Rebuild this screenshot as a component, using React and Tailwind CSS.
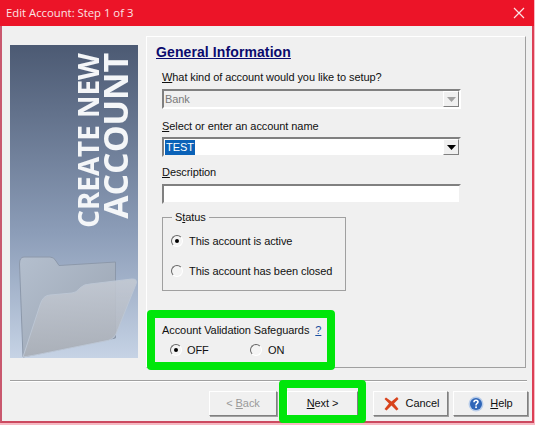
import React from "react";

const font = "font-['Liberation_Sans',Arial,sans-serif]";

const Radio = ({ checked }) => (
  <span className="flex h-[12px] w-[12px] shrink-0 items-center justify-center rounded-full border border-t-[#666] border-l-[#666] border-r-white border-b-white bg-[#f4f4f4]">
    {checked && <span className="h-[4px] w-[4px] rounded-full bg-black"></span>}
  </span>
);

const Combo = ({ disabled, children }) => (
  <div
    className={
      disabled
        ? "flex h-[20px] w-[299px] items-center justify-between border-2 border-t-[#808080] border-l-[#808080] border-r-white border-b-white bg-[#f0f0f0]"
        : "flex h-[20px] w-[299px] items-center justify-between border-2 border-t-[#808080] border-l-[#808080] border-r-[#f0f0f0] border-b-[#f0f0f0] bg-white"
    }
  >
    <div className="flex-1">{children}</div>
    <div className="flex h-[16px] w-[16px] items-center justify-center border border-t-white border-l-white border-r-[#808080] border-b-[#808080] bg-[#f0f0f0]">
      <svg width="9" height="5" viewBox="0 0 9 5">
        <path d="M0 0H9L4.5 5Z" fill={disabled ? "#a0a0a0" : "#000"} />
      </svg>
    </div>
  </div>
);

const Btn = ({ className, children }) => (
  <button
    className={
      "flex h-[25px] items-center justify-center border border-t-white border-l-white border-r-[#808080] border-b-[#808080] bg-[#f0f0f0] shadow-[1px_1px_0_#a0a0a0] " +
      className
    }
  >
    {children}
  </button>
);

const Folder = () => (
  <svg width="128" height="108" viewBox="0 0 128 108" className="mt-auto shrink-0">
    <defs>
      <linearGradient id="back" x1="0" y1="0" x2="1" y2="1">
        <stop offset="0" stopColor="#b4bfce" />
        <stop offset="1" stopColor="#98a2b0" />
      </linearGradient>
      <linearGradient id="front" x1="0" y1="0" x2="0" y2="1">
        <stop offset="0" stopColor="#c4cad4" />
        <stop offset="1" stopColor="#abb0b8" />
      </linearGradient>
      <filter id="soft">
        <feGaussianBlur stdDeviation="0.4" />
      </filter>
    </defs>
    <g filter="url(#soft)">
      <path
        d="M13 107L9.5 14Q9.5 7 14 7L40 7Q44 7 46 11L49 15.5L105.5 12L105.5 88Z"
        fill="url(#back)"
        stroke="#8c98aa"
      />
      <path
        d="M13 107L30 55Q33 45 40 45L62 43Q66 43 70 38Q74 34 80 34L122 29Q128 29 126 34L106 84Q103 90 95 91L25 105Z"
        fill="url(#front)"
        fillOpacity="0.88"
        stroke="#bcc6d4"
      />
    </g>
  </svg>
);

export default function App() {
  return (
    <div className={"relative h-[425px] w-[535px] overflow-hidden bg-[#f7b9c3] text-[11px] leading-none tracking-[-0.08px] text-[#111] " + font}>
      <div className="flex h-[423px] w-[534px] flex-col border-x-2 border-b-2 border-l-[#c9586e] border-r-[#dc3f55] border-b-[#cc4a60] bg-[#f0f0f0]">
        {/* Title bar */}
        <div className="-mx-[2px] flex h-[26px] shrink-0 items-center justify-between bg-[#ec1428] pl-[6px] pr-[9px]">
          <span className="font-['Open_Sans',sans-serif] text-[11.3px] tracking-normal text-[#fbe3e5]">Edit Account: Step 1 of 3</span>
          <svg width="12" height="12" viewBox="0 0 12 12">
            <path d="M1 1L11 11M11 1L1 11" stroke="#fbe3e5" strokeWidth="1.2" />
          </svg>
        </div>

        <div className="flex gap-[8px] pl-[8px] pt-[10px]">
          {/* Side picture */}
          <div className="mt-[9px] flex h-[313px] w-[128px] shrink-0 flex-col overflow-hidden bg-gradient-to-b from-[#4c5a73] via-[#8c9db8] via-60% to-[#c6d3e5]">
            <div className="flex justify-end pr-[9px] pt-[8px]">
              <div className="rotate-180 text-end font-['Open_Sans',sans-serif] font-bold tracking-normal text-[#f4f6f8] [writing-mode:vertical-rl]">
                <div className="text-[27.8px] leading-[25px]">CREATE NEW</div>
                <div className="text-[33.8px] leading-[28px]">ACCOUNT</div>
              </div>
            </div>
            <Folder />
          </div>

          {/* Main panel */}
          <div className="flex h-[332px] w-[380px] flex-col border border-t-white border-l-white border-r-[#a0a0a0] border-b-[#a0a0a0] pl-[15px] pt-[7px]">
            <h1 className="-ml-[6px] h-[16px] text-[14px] font-bold leading-[16px] tracking-[0.1px] text-[#0a0a6e] underline">General Information</h1>

            <label className="mt-[9px] h-[16px] leading-[16px]"><u>W</u>hat kind of account would you like to setup?</label>
            <div className="mt-[4px]">
              <Combo disabled>
                <span className="block pl-[1px] pt-[1px] text-[#7a7a7a]">Bank</span>
              </Combo>
            </div>

            <label className="mt-[9px] h-[16px] leading-[16px]"><u>S</u>elect or enter an account name</label>
            <div className="mt-[3px]">
              <Combo>
                <span className="ml-[1px] inline-block h-[15px] bg-[#0a62b8] px-[1px] leading-[15px] text-white">TEST</span>
              </Combo>
            </div>

            <label className="mt-[7px] h-[16px] leading-[16px]"><u>D</u>escription</label>
            <input className="mt-[4px] h-[20px] w-[299px] border-2 border-t-[#808080] border-l-[#808080] border-r-[#f0f0f0] border-b-[#f0f0f0] bg-white" />

            <fieldset className="mt-[6px] h-[81px] w-[184px] border border-[#a0a0a0] pl-[8px]">
              <legend className="ml-[1px] h-[14px] px-[3px] leading-[14px]">S<u>t</u>atus</legend>
              <div className="mt-[9px] flex h-[16px] items-center gap-[6px]">
                <Radio checked />
                <span>This account is active</span>
              </div>
              <div className="mt-[14px] flex h-[16px] items-center gap-[6px]">
                <Radio />
                <span>This account has been closed</span>
              </div>
            </fieldset>

            <div className="mt-[31px] flex h-[16px] items-center">
              <span>Account Validation Safeguards</span>
              <a className="ml-[6px] text-[#1a4fa0] underline">?</a>
            </div>
            <div className="mt-[4px] flex h-[16px] items-center pl-[8px]">
              <Radio checked />
              <span className="ml-[5px] w-[63px]">OFF</span>
              <Radio />
              <span className="ml-[6px]">ON</span>
            </div>
          </div>
        </div>

        {/* Separator and buttons */}
        <div className="ml-[8px] mt-[12px] h-[2px] w-[517px] border-t border-b border-t-[#a0a0a0] border-b-white"></div>
        <div className="mt-[9px] flex pl-[207px]">
          <Btn className="w-[68px] text-[#9a9a9a]">&lt; <u className="ml-[3px]">B</u>ack</Btn>
          <Btn className="ml-[10px] w-[71px]"><u>N</u>ext &gt;</Btn>
          <Btn className="ml-[15px] w-[75px] gap-[7px] pl-[2px]">
            <svg width="15" height="15" viewBox="0 0 15 15">
              <path d="M2 1.5L7.5 5.5L13 1L14.5 3L10 7.5L14.5 13L12.5 14.5L7.5 9.5L2.5 14.5L0.5 13L5 7.5L0.5 3Z" fill="#d8431c" />
            </svg>
            <span>Cancel</span>
          </Btn>
          <Btn className="ml-[5px] w-[75px] gap-[6px]">
            <svg width="16" height="16" viewBox="0 0 16 16">
              <circle cx="8" cy="8" r="7.5" fill="#b9cdea" />
              <circle cx="8" cy="8" r="6" fill="#2f66b8" />
              <path d="M6 6.2Q6 4.3 8 4.3Q10 4.3 10 6Q10 7 8.6 7.8Q8 8.2 8 9.4" fill="none" stroke="#fff" strokeWidth="1.6" />
              <rect x="7.2" y="10.4" width="1.7" height="1.7" fill="#fff" />
            </svg>
            <span><u>H</u>elp</span>
          </Btn>
        </div>
      </div>

      {/* Green highlights drawn over the dialog */}
      <div className="absolute left-[147px] top-[310px] h-[60px] w-[188px] rounded-[4px] border-[8px] border-[#00e60a]"></div>
      <div className="absolute left-[279px] top-[380px] h-[43px] w-[87px] rounded-[4px] border-[8px] border-[#00e60a]"></div>
    </div>
  );
}
